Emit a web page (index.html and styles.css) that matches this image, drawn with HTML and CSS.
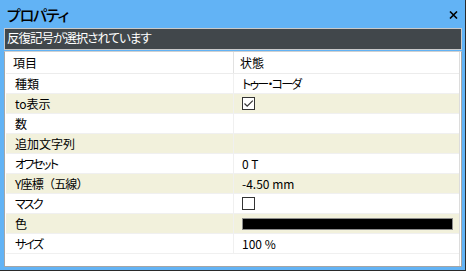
FILE: index.html
```html
<!DOCTYPE html>
<html lang="ja">
<head>
<meta charset="UTF-8">
<title>プロパティ</title>
<link rel="stylesheet" href="styles.css">
</head>
<body>

<!-- ===== プロパティウィンドウ ===== -->
<div class="win">
  <div class="titlebar">
    <span class="title">プロパティ</span>
    <svg class="close" width="9" height="8" viewBox="0 0 9 8">
      <path d="M1 0.5 L8 7.5 M8 0.5 L1 7.5" stroke="#000" stroke-width="1.6"/>
    </svg>
  </div>

  <div class="status">反復記号が選択されています</div>

  <div class="panel">
    <div class="grid">
      <div class="row head"><div class="k">項目</div><div class="v">状態</div></div>
      <div class="row"><div class="k">種類</div><div class="v kana">トゥー・コーダ</div></div>
      <div class="row alt"><div class="k">to表示</div><div class="v">
        <span class="chk"><svg width="11" height="11" viewBox="0 0 11 11">
          <polyline points="1.5,5.5 4.2,8.2 9.8,2.6" fill="none" stroke="#333" stroke-width="1.2"/>
        </svg></span></div></div>
      <div class="row"><div class="k">数</div><div class="v"></div></div>
      <div class="row alt"><div class="k">追加文字列</div><div class="v"></div></div>
      <div class="row"><div class="k kana">オフセット</div><div class="v">0 T</div></div>
      <div class="row alt"><div class="k wide">Y座標（五線）</div><div class="v">-4.50 mm</div></div>
      <div class="row"><div class="k kana">マスク</div><div class="v"><span class="chk"></span></div></div>
      <div class="row alt"><div class="k">色</div><div class="v"><span class="swatch"></span></div></div>
      <div class="row"><div class="k kana">サイズ</div><div class="v">100 %</div></div>
    </div>
  </div>
</div>

</body>
</html>
```

FILE: styles.css
```css
:root{
  --blue:#62b3f5;--dark:#41474b;--beige:#f2f1dc;--line:#e6e6e6;
}
*{box-sizing:border-box;margin:0;padding:0}
body{font:12px/1 "Noto Sans CJK JP","Noto Sans",sans-serif;
     font-feature-settings:"palt";color:#000;background:#fff}
.win{width:466px;height:271px;background:var(--blue);
     padding:0 3px 3px 4px;border-right:1px solid #2a2a2a;border-bottom:1px solid #2a2a2a;
     display:flex;flex-direction:column}
.titlebar{height:28px;display:flex;align-items:center;justify-content:space-between;
          padding:0 4px 0 3px}
.title{font-size:15px;font-weight:500;letter-spacing:-1.2px}
.close{margin-top:2px}
.status{height:22px;background:var(--dark);border:1px solid #c9c9c9;color:#fff;
        font-size:12.5px;letter-spacing:-1px;display:flex;align-items:center;padding:0 0 1px 2px}
.panel{flex:1;margin-top:1px;background:#fff;border:1px solid #a5a5a5;border-top-color:#d0d0d0;
       padding:0 1px 0 1px}
.grid{border-right:1px solid #dcdcdc;height:100%}
.row{display:grid;grid-template-columns:227px 1fr;height:20px;
     border-bottom:1px solid #f0f0f0}
.row.alt{background:var(--beige)}
.row.head{height:22px;border-bottom-color:#ececec}
.k,.v{display:flex;align-items:center}
.k{padding-left:9px}
.v{padding-left:8px;border-left:1px solid #f0f0f0}
.head .k{padding-left:7px}
.head .v{padding-left:6px;border-left-color:#e2e2e2}
.kana{letter-spacing:-1.8px}
.wide{font-feature-settings:normal;letter-spacing:-.8px}
.chk{width:13px;height:13px;border:1px solid #333;background:#fff;
     display:flex;align-items:center;justify-content:center}
.swatch{width:211px;height:12px;background:#000;border:1px solid #8c8c8c}
```
